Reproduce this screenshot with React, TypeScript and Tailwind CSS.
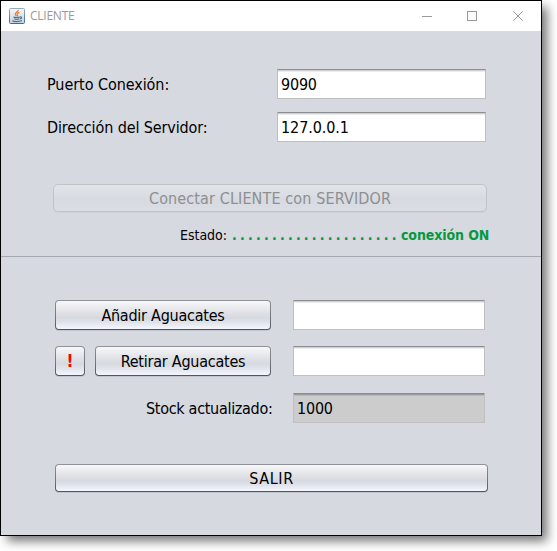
import React from "react";

const FONT = "font-['DejaVu_Sans_Condensed','DejaVu_Sans',sans-serif] [font-stretch:condensed]";

function JavaIcon() {
  return (
    <svg width="16" height="16" viewBox="0 0 16 16" fill="none">
      <defs>
        <linearGradient id="java-bg" x1="0" y1="0" x2="0" y2="1">
          <stop offset="0" stopColor="#f6f8fa" />
          <stop offset="1" stopColor="#c3d0dc" />
        </linearGradient>
        <linearGradient id="java-edge" x1="0" y1="0" x2="0" y2="1">
          <stop offset="0" stopColor="#9aa9b6" />
          <stop offset="1" stopColor="#3f6d8f" />
        </linearGradient>
      </defs>
      <rect x="0.5" y="0.5" width="15" height="15" rx="1" fill="url(#java-bg)" stroke="url(#java-edge)" />
      <path d="M9.2 1.8C9.6 3.6 6 4.4 6.3 6.2C6.4 7 7.2 7.6 7.6 8.3M10.3 4.3C8.6 5 7.8 5.6 8.4 6.6C8.8 7.2 8.6 7.8 8.2 8.3" stroke="#e8822e" strokeWidth="1.3" />
      <path d="M4.5 9C5.5 9.8 9.8 9.7 10.8 9M11 9C13.2 8.4 13 10.6 10.8 11M5.2 10.8C6.5 11.5 9 11.5 10.2 10.8M3.3 12.7C5 13.9 10.5 13.9 12.8 12.6" stroke="#4a7596" strokeWidth="1.2" />
    </svg>
  );
}

function TitleBar() {
  return (
    <header className="flex h-[30px] items-center bg-white pl-2 [font-stretch:normal]">
      <JavaIcon />
      <span className="ml-[5px] font-['Open_Sans','Noto_Sans',sans-serif] text-[12px] leading-[16px] tracking-[-0.25px] text-[#999999]">CLIENTE</span>
      <svg className="ml-auto mr-[14px]" width="105" height="10" viewBox="0 0 105 10" fill="none" stroke="#999999">
        <path d="M0 5.5H10" />
        <rect x="45.5" y="0.5" width="9" height="9" />
        <path d="M91.3 0.3L100.7 9.7M100.7 0.3L91.3 9.7" />
      </svg>
    </header>
  );
}

function Field({ value = "", className = "" }: { value?: string; className?: string }) {
  return (
    <input
      readOnly
      value={value}
      className={`h-[30px] shrink-0 rounded-none border border-[#bfbfc1] border-t-[#8d8e91] px-[3px] pt-px text-[16px] text-black outline-none ${className}`}
    />
  );
}

const WHITE_FIELD = "bg-white shadow-[inset_0_1px_0_#d0d0d1,inset_0_2px_0_#ececec]";

function Button({ children, className = "" }: { children: React.ReactNode; className?: string }) {
  return (
    <button
      className={`flex shrink-0 items-center justify-center rounded-[4px] bg-[linear-gradient(#8f9298,#70747b_60%,#50545c)] p-px text-[16px] text-black shadow-[0_1px_0_#c2c5cd] ${className}`}
    >
      <span className="flex h-full w-full items-center justify-center rounded-[3px] bg-[linear-gradient(#f8f8fa,#e6e7eb_30%,#d6d9df_60%,#dfe2e8_75%,#f4f7fd)] pt-px whitespace-pre">
        {children}
      </span>
    </button>
  );
}

export default function App() {
  return (
    <div className="h-[551px] w-[557px] overflow-hidden bg-white">
      <main className={`flex h-[536px] w-[542px] flex-col border border-black bg-[#d6d9e0] shadow-[6px_6px_10px_-1px_rgba(0,0,0,0.55)] ${FONT}`}>
        <TitleBar />
        <section className="h-[225px] pt-[38px]">
          <div className="flex h-[30px] items-center pl-[46px]">
            <label className="w-[230px] pt-[2px] whitespace-nowrap text-[16px] leading-[20px] tracking-[-0.06px] text-black">Puerto Conexión:</label>
            <Field value="9090" className={`w-[209px] tracking-[-0.2px] ${WHITE_FIELD}`} />
          </div>
          <div className="mt-[13px] flex h-[30px] items-center pl-[46px]">
            <label className="w-[230px] pt-[2px] whitespace-nowrap text-[16px] leading-[20px] tracking-[-0.12px] text-black">Dirección del Servidor:</label>
            <Field value="127.0.0.1" className={`w-[209px] tracking-[-0.08px] ${WHITE_FIELD}`} />
          </div>
          <div className="mt-[42px] pl-[52px]">
            <button
              disabled
              className="h-[28px] w-[434px] rounded-[5px] border border-[#c0c3ca] bg-[linear-gradient(#e1e4e8,#d7dae0_55%,#dadde4)] pt-[2px] text-[16px] leading-[24px] tracking-[0.12px] text-[#8e8f91] shadow-[0_1px_0_#ced1d8]"
            >
              Conectar CLIENTE con SERVIDOR
            </button>
          </div>
          <p className="mt-[14px] flex pl-[179px] text-[14px] leading-[18px] whitespace-nowrap">
            <span className="w-[52px] tracking-[-0.02px] text-black">Estado:</span>
            <span className="w-[169px] font-bold tracking-[3.2px] text-[#069840]">.....................</span>
            <span className="font-bold tracking-[-0.1px] text-[#069840]">conexión ON</span>
          </p>
        </section>
        <section className="border-t border-[#a5a9b1] pt-[43px] pl-[54px]">
          <div className="flex">
            <Button className="h-[30px] w-[216px] tracking-[-0.24px]">Añadir Aguacates</Button>
            <Field className={`ml-[22px] w-[192px] ${WHITE_FIELD}`} />
          </div>
          <div className="mt-[16px] flex">
            <Button className="h-[30px] w-[30px]"><span className="text-[17px] font-bold text-[#ff0000]">!</span></Button>
            <Button className="ml-[10px] h-[30px] w-[176px] tracking-[-0.24px]">Retirar Aguacates</Button>
            <Field className={`ml-[22px] w-[192px] ${WHITE_FIELD}`} />
          </div>
          <div className="mt-[17px] flex items-center">
            <label className="w-[238px] pt-[2px] pl-[91px] whitespace-nowrap text-[16px] leading-[20px] tracking-[-0.3px] text-black">Stock actualizado:</label>
            <Field value="1000" className="w-[192px] bg-[#cccccc] tracking-[-0.2px] shadow-[inset_0_1px_0_#999a9b,inset_0_2px_0_#bababa]" />
          </div>
          <Button className="mt-[41px] h-[28px] w-[433px] tracking-[0.6px]">SALIR</Button>
        </section>
      </main>
    </div>
  );
}
